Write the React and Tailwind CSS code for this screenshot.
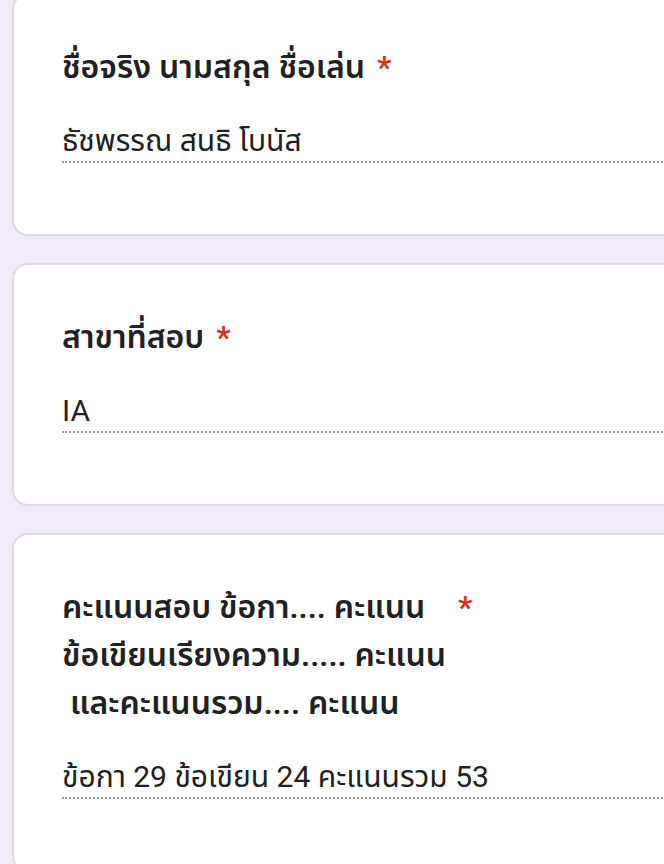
import React from "react";

const font = { fontFamily: 'Roboto, "Noto Sans Thai", "Noto Sans", sans-serif' };

function Question({ title, answer, first }) {
  return (
    <div
      className={`w-[720px] shrink-0 bg-white border-2 border-[#dadce0] rounded-2xl px-12 pt-12 pb-[71px] ${
        first ? "-mt-[7px]" : ""
      }`}>
      <div className="flex items-start text-[32px] leading-[48px] font-semibold text-[#202124]">
        <div className="whitespace-pre-wrap">{title}</div>
        <span className="ml-3 text-[#d93025]">*</span>
      </div>
      <div className="mt-[30px] border-b-2 border-dotted border-[#9e9e9e] text-[30px] leading-[40px] text-[#202124]">
        {answer}
      </div>
    </div>
  );
}

export default function App() {
  return (
    <div
      className="w-[664px] h-[864px] overflow-hidden bg-[#f0ebf8] pl-3"
      style={font}>
      <div className="flex flex-col gap-[27px]">
        <Question first title="ชื่อจริง นามสกุล ชื่อเล่น" answer="ธัชพรรณ สนธิ โบนัส" />
        <Question title="สาขาที่สอบ" answer="IA" />
        <Question
          title={"คะแนนสอบ ข้อกา.... คะแนน \nข้อเขียนเรียงความ..... คะแนน\n และคะแนนรวม.... คะแนน"}
          answer="ข้อกา 29 ข้อเขียน 24 คะแนนรวม 53"
        />
      </div>
    </div>
  );
}
